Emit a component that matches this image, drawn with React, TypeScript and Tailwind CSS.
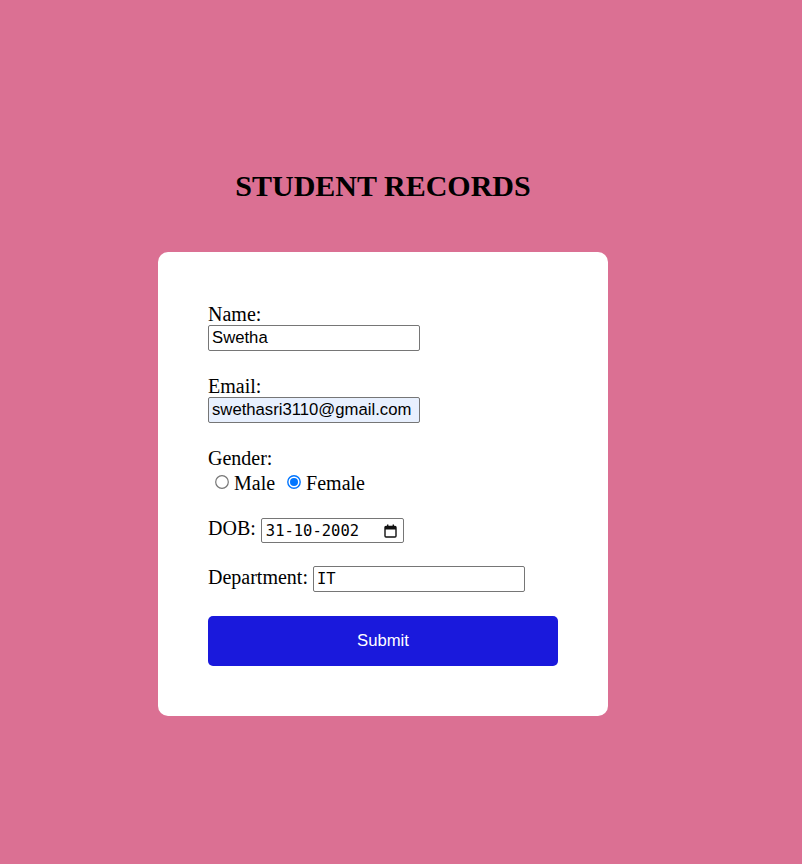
import React from "react";

function Radio({ checked }: { checked?: boolean }) {
  return (
    <svg width="14" height="14" viewBox="0 0 14 14" className="shrink-0">
      {checked ? (
        <>
          <circle cx="7" cy="7" r="6.2" fill="white" stroke="#0075ff" strokeWidth="1.4" />
          <circle cx="7" cy="7" r="4" fill="#0075ff" />
        </>
      ) : (
        <circle cx="7" cy="7" r="6.3" fill="white" stroke="#767676" strokeWidth="1.2" />
      )}
    </svg>
  );
}

export default function App() {
  return (
    <div className="min-h-[864px] w-full bg-[#db7093] pt-[169px] pl-[158px] font-['Liberation_Serif',serif] text-black">
      <div className="w-[450px]">
        <h1 className="text-center text-[30px] font-bold leading-[33px]">STUDENT RECORDS</h1>
        <form
          className="mt-[50px] flex flex-col rounded-[10px] bg-white px-[50px] pt-[51px] pb-[50px] text-[20px] leading-[22px]"
          onSubmit={(e) => e.preventDefault()}
        >
          <label className="block h-[22px]">Name:</label>
          <input
            type="text"
            defaultValue="Swetha"
            className="h-[26px] w-[212px] rounded-[2px] border border-[#767676] bg-white px-[3px] font-['Liberation_Sans',Arial,sans-serif] text-[16.7px] leading-[normal] outline-none"
          />

          <label className="mt-[24px] block h-[22px]">Email:</label>
          <input
            type="email"
            defaultValue="swethasri3110@gmail.com"
            className="h-[26px] w-[212px] rounded-[2px] border border-[#767676] bg-[#e8f0fe] px-[3px] font-['Liberation_Sans',Arial,sans-serif] text-[16.7px] leading-[normal] outline-none"
          />

          <label className="mt-[24px] block h-[22px]">Gender:</label>
          <div className="mt-[3px] flex h-[22px] items-start">
            <span className="mt-[3px] ml-[7px]">
              <Radio />
            </span>
            <span className="ml-[5px]">Male</span>
            <span className="mt-[3px] ml-[12px]">
              <Radio checked />
            </span>
            <span className="ml-[5px]">Female</span>
          </div>

          <div className="mt-[23px] flex h-[26px] items-start">
            <span>DOB:</span>
            <div className="mt-[1px] ml-[5px] flex h-[25px] w-[143px] items-center rounded-[2px] border border-[#767676] bg-white pl-[4px] pr-[6px] font-['DejaVu_Sans_Mono',monospace] text-[15.5px]">
              <span className="flex-1 whitespace-pre">31-10-2002</span>
              <svg width="13" height="14" viewBox="0 0 13 14" fill="none">
                <rect x="1" y="2.5" width="11" height="10.5" rx="1" stroke="#111" strokeWidth="1.4" />
                <rect x="1" y="2.5" width="11" height="3" fill="#111" />
                <rect x="3" y="0.5" width="1.4" height="2.5" fill="#111" />
                <rect x="8.6" y="0.5" width="1.4" height="2.5" fill="#111" />
              </svg>
            </div>
          </div>

          <div className="mt-[23px] flex h-[26px] items-start">
            <span>Department:</span>
            <input
              type="text"
              defaultValue="IT"
              className="ml-[5px] h-[26px] w-[212px] rounded-[2px] border border-[#767676] bg-white px-[3px] font-['DejaVu_Sans_Mono',monospace] text-[15.5px] leading-[normal] outline-none"
            />
          </div>

          <button
            type="submit"
            className="mt-[24px] h-[50px] w-[350px] rounded-[5px] bg-[#1a19dc] font-['Liberation_Sans',Arial,sans-serif] text-[16.7px] text-white"
          >
            Submit
          </button>
        </form>
      </div>
    </div>
  );
}
